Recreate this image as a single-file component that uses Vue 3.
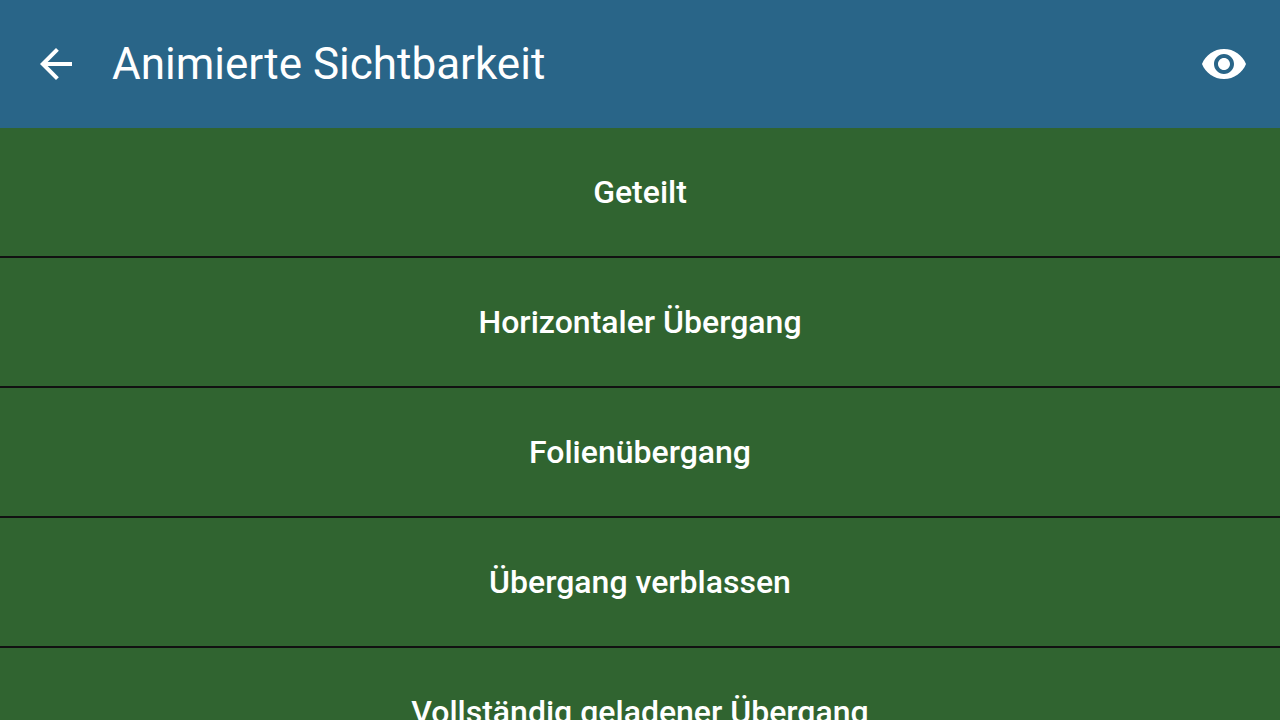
<script setup>
const items = [
  'Geteilt',
  'Horizontaler Übergang',
  'Folienübergang',
  'Übergang verblassen',
  'Vollständig geladener Übergang',
]
</script>

<template>
  <div class="screen">
    <header class="bar">
      <button class="icon-button" type="button" aria-label="Zurück">
        <svg class="icon" viewBox="0 0 24 24" aria-hidden="true">
          <path d="M20 11H7.83l5.59-5.59L12 4l-8 8 8 8 1.41-1.41L7.83 13H20v-2z" />
        </svg>
      </button>
      <h1 class="title">Animierte Sichtbarkeit</h1>
      <button class="icon-button" type="button" aria-label="Sichtbarkeit umschalten">
        <svg class="icon" viewBox="0 0 24 24" aria-hidden="true">
          <path d="M12 4.5C7 4.5 2.73 7.61 1 12c1.73 4.39 6 7.5 11 7.5s9.27-3.11 11-7.5c-1.73-4.39-6-7.5-11-7.5zM12 17c-2.76 0-5-2.24-5-5s2.24-5 5-5 5 2.24 5 5-2.24 5-5 5zm0-8c-1.66 0-3 1.34-3 3s1.34 3 3 3 3-1.34 3-3-1.34-3-3-3z" />
        </svg>
      </button>
    </header>
    <main class="list">
      <button v-for="item in items" :key="item" class="row" type="button">{{ item }}</button>
    </main>
  </div>
</template>

<style>
body {
  margin: 0;
}
</style>

<style scoped>
.screen {
  display: flex;
  flex-direction: column;
  height: 100vh;
  background: #306430;
  color: #fff;
  font-family: Roboto, sans-serif;
}

.bar {
  display: flex;
  flex: none;
  align-items: center;
  gap: 32px;
  padding: 36px 32px;
  background: #296588;
}

.icon-button {
  display: flex;
  padding: 0;
  border: 0;
  background: none;
  color: inherit;
}

.icon {
  width: 48px;
  height: 48px;
  fill: currentColor;
}

.title {
  flex: 1;
  margin: 0;
  font-size: 44px;
  font-weight: 400;
  line-height: 56px;
}

.list {
  flex: 1;
  min-height: 0;
  overflow-y: auto;
  scrollbar-width: none;
}

.row {
  display: block;
  width: 100%;
  padding: 44px 32px;
  border: 0;
  border-bottom: 2px solid #111;
  background: #306430;
  color: inherit;
  font: 500 32px/40px Roboto, sans-serif;
  text-align: center;
}
</style>
